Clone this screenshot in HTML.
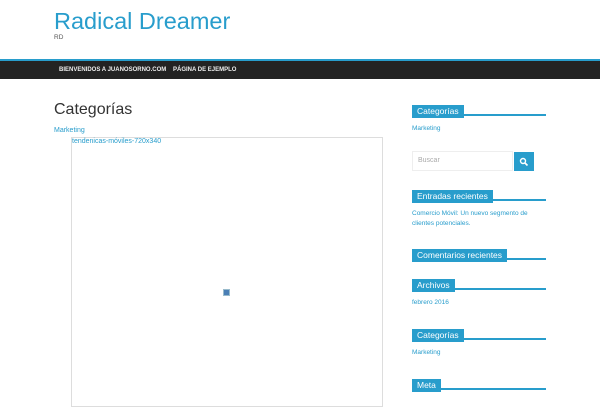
<!DOCTYPE html>
<html><head><meta charset="utf-8"><style>
*{margin:0;padding:0;box-sizing:border-box}
body{width:600px;height:400px;overflow:hidden;background:#fff;font-family:"Liberation Sans",sans-serif;position:relative}
.a{position:absolute}
.t{color:#289dcc}
.wh{position:absolute;left:412px;width:134px;height:15px;border-bottom:2px solid #289dcc}
.wh span{display:inline-block;background:#289dcc;color:#fff;font-size:8.5px;line-height:13px;padding:0 5px;height:13px}
.sm{font-size:6.5px;color:#289dcc;position:absolute;left:412px;line-height:10px}
</style></head><body>
<div class="a t" style="left:54px;top:8px;font-size:23.5px">Radical Dreamer</div>
<div class="a" style="left:54px;top:34px;font-size:6.5px;color:#555">RD</div>
<div class="a" style="left:0;top:59px;width:600px;height:20px;background:#232323;border-top:2px solid #289dcc"></div>
<div class="a" style="left:59px;top:67px;font-size:6px;font-weight:bold;color:#eee">BIENVENIDOS A JUANOSORNO.COM</div>
<div class="a" style="left:173px;top:67px;font-size:6px;font-weight:bold;color:#eee">PÁGINA DE EJEMPLO</div>
<div class="a" style="left:54px;top:101px;font-size:16px;color:#333">Categorías</div>
<div class="a t" style="left:54px;top:127px;font-size:7px">Marketing</div>
<div class="a" style="left:71px;top:137px;width:312px;height:270px;border:1px solid #ddd"></div>
<div class="a t" style="left:72px;top:138px;font-size:7px">tendenicas-móviles-720x340</div>
<div class="a" style="left:223px;top:289px;width:7px;height:7px;background:#4a7fb5;border:1px solid #9bc"></div>

<div class="wh" style="top:101px"><span>Categorías</span></div>
<div class="sm" style="top:124px">Marketing</div>
<div class="a" style="left:412px;top:151px;width:101px;height:20px;border:1px solid #eee;font-size:7px;color:#aaa;padding:5px 5px">Buscar</div>
<div class="a" style="left:514px;top:152px;width:20px;height:19px;background:#289dcc"></div>
<svg class="a" style="left:519px;top:157px" width="10" height="10" viewBox="0 0 10 10"><circle cx="4" cy="4" r="2.5" fill="none" stroke="#fff" stroke-width="1.4"/><line x1="6" y1="6" x2="8.5" y2="8.5" stroke="#fff" stroke-width="1.6"/></svg>
<div class="wh" style="top:186px"><span>Entradas recientes</span></div>
<div class="sm" style="top:209px;width:130px">Comercio Móvil: Un nuevo segmento de clientes potenciales.</div>
<div class="wh" style="top:245px"><span>Comentarios recientes</span></div>
<div class="wh" style="top:275px"><span>Archivos</span></div>
<div class="sm" style="top:298px">febrero 2016</div>
<div class="wh" style="top:325px"><span>Categorías</span></div>
<div class="sm" style="top:348px">Marketing</div>
<div class="wh" style="top:375px"><span>Meta</span></div>
</body></html>
